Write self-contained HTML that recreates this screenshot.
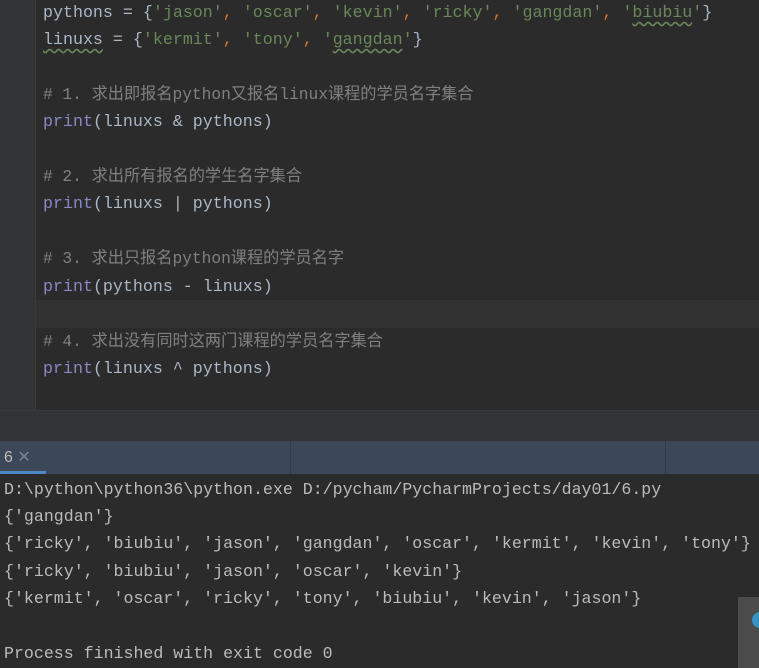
<!DOCTYPE html><html><head><style>
body{margin:0;width:759px;height:668px;background:#2b2b2b;overflow:hidden;position:relative;font-family:"Liberation Mono","Noto Sans CJK SC",monospace}
.g{position:absolute;left:0;top:0;width:35px;height:410px;background:#313335;border-right:1px solid #3a3a3a}
.hl{position:absolute;left:36px;top:300px;width:723px;height:28px;background:#323232}
.l{position:absolute;left:43px;font-size:16.65px;color:#a9b7c6;white-space:pre;line-height:20px}
.s{color:#6a8759}.c{color:#cc7832}.m{color:#808080;font-size:16.2px}.p{color:#8888c6}
.u{text-decoration:underline wavy #6a8759;text-underline-offset:4px}
.band{position:absolute;left:0;top:410px;width:759px;height:31px;background:#313335;border-top:1px solid #3a3a3a}
.tab{position:absolute;left:0;top:441px;width:759px;height:33px;background:#3c4857}
.o{position:absolute;left:4px;font-size:16.6px;color:#bbbbbb;white-space:pre;line-height:20px}
</style></head><body>
<div class="g"></div><div class="hl"></div>
<div class="l" style="top:3px">pythons = {<span class="s">'jason'</span><span class="c">,</span> <span class="s">'oscar'</span><span class="c">,</span> <span class="s">'kevin'</span><span class="c">,</span> <span class="s">'ricky'</span><span class="c">,</span> <span class="s">'gangdan'</span><span class="c">,</span> <span class="s">'<span class="u">biubiu</span>'</span>}</div>
<div class="l" style="top:30px"><span class="u">linuxs</span> = {<span class="s">'kermit'</span><span class="c">,</span> <span class="s">'tony'</span><span class="c">,</span> <span class="s">'<span class="u">gangdan</span>'</span>}</div>
<div class="l m" style="top:85px"># 1. 求出即报名python又报名linux课程的学员名字集合</div>
<div class="l" style="top:112px"><span class="p">print</span>(linuxs &amp; pythons)</div>
<div class="l m" style="top:167px"># 2. 求出所有报名的学生名字集合</div>
<div class="l" style="top:194px"><span class="p">print</span>(linuxs | pythons)</div>
<div class="l m" style="top:249px"># 3. 求出只报名python课程的学员名字</div>
<div class="l" style="top:277px"><span class="p">print</span>(pythons - linuxs)</div>
<div class="l m" style="top:332px"># 4. 求出没有同时这两门课程的学员名字集合</div>
<div class="l" style="top:359px"><span class="p">print</span>(linuxs ^ pythons)</div>
<div class="band"></div>
<div class="tab">
<div style="position:absolute;left:4px;top:6px;font-size:16px;color:#bbbbbb;font-family:'Liberation Sans',sans-serif">6 <span style="color:#7a8593">✕</span></div>
<div style="position:absolute;left:0;bottom:0;width:46px;height:3px;background:#4a88c7"></div>
<div style="position:absolute;left:290px;top:0;width:1px;height:33px;background:#323b45"></div>
<div style="position:absolute;left:665px;top:0;width:1px;height:33px;background:#323b45"></div>
</div>
<div class="o" style="top:480px">D:\python\python36\python.exe D:/pycham/PycharmProjects/day01/6.py</div>
<div class="o" style="top:507px">{'gangdan'}</div>
<div class="o" style="top:534px">{'ricky', 'biubiu', 'jason', 'gangdan', 'oscar', 'kermit', 'kevin', 'tony'}</div>
<div class="o" style="top:562px">{'ricky', 'biubiu', 'jason', 'oscar', 'kevin'}</div>
<div class="o" style="top:589px">{'kermit', 'oscar', 'ricky', 'tony', 'biubiu', 'kevin', 'jason'}</div>
<div class="o" style="top:644px">Process finished with exit code 0</div>
<div style="position:absolute;left:738px;top:597px;width:21px;height:71px;background:#4b4b4b"></div>
<div style="position:absolute;left:752px;top:612px;width:16px;height:16px;border-radius:50%;background:#3592c4"></div>
</body></html>
